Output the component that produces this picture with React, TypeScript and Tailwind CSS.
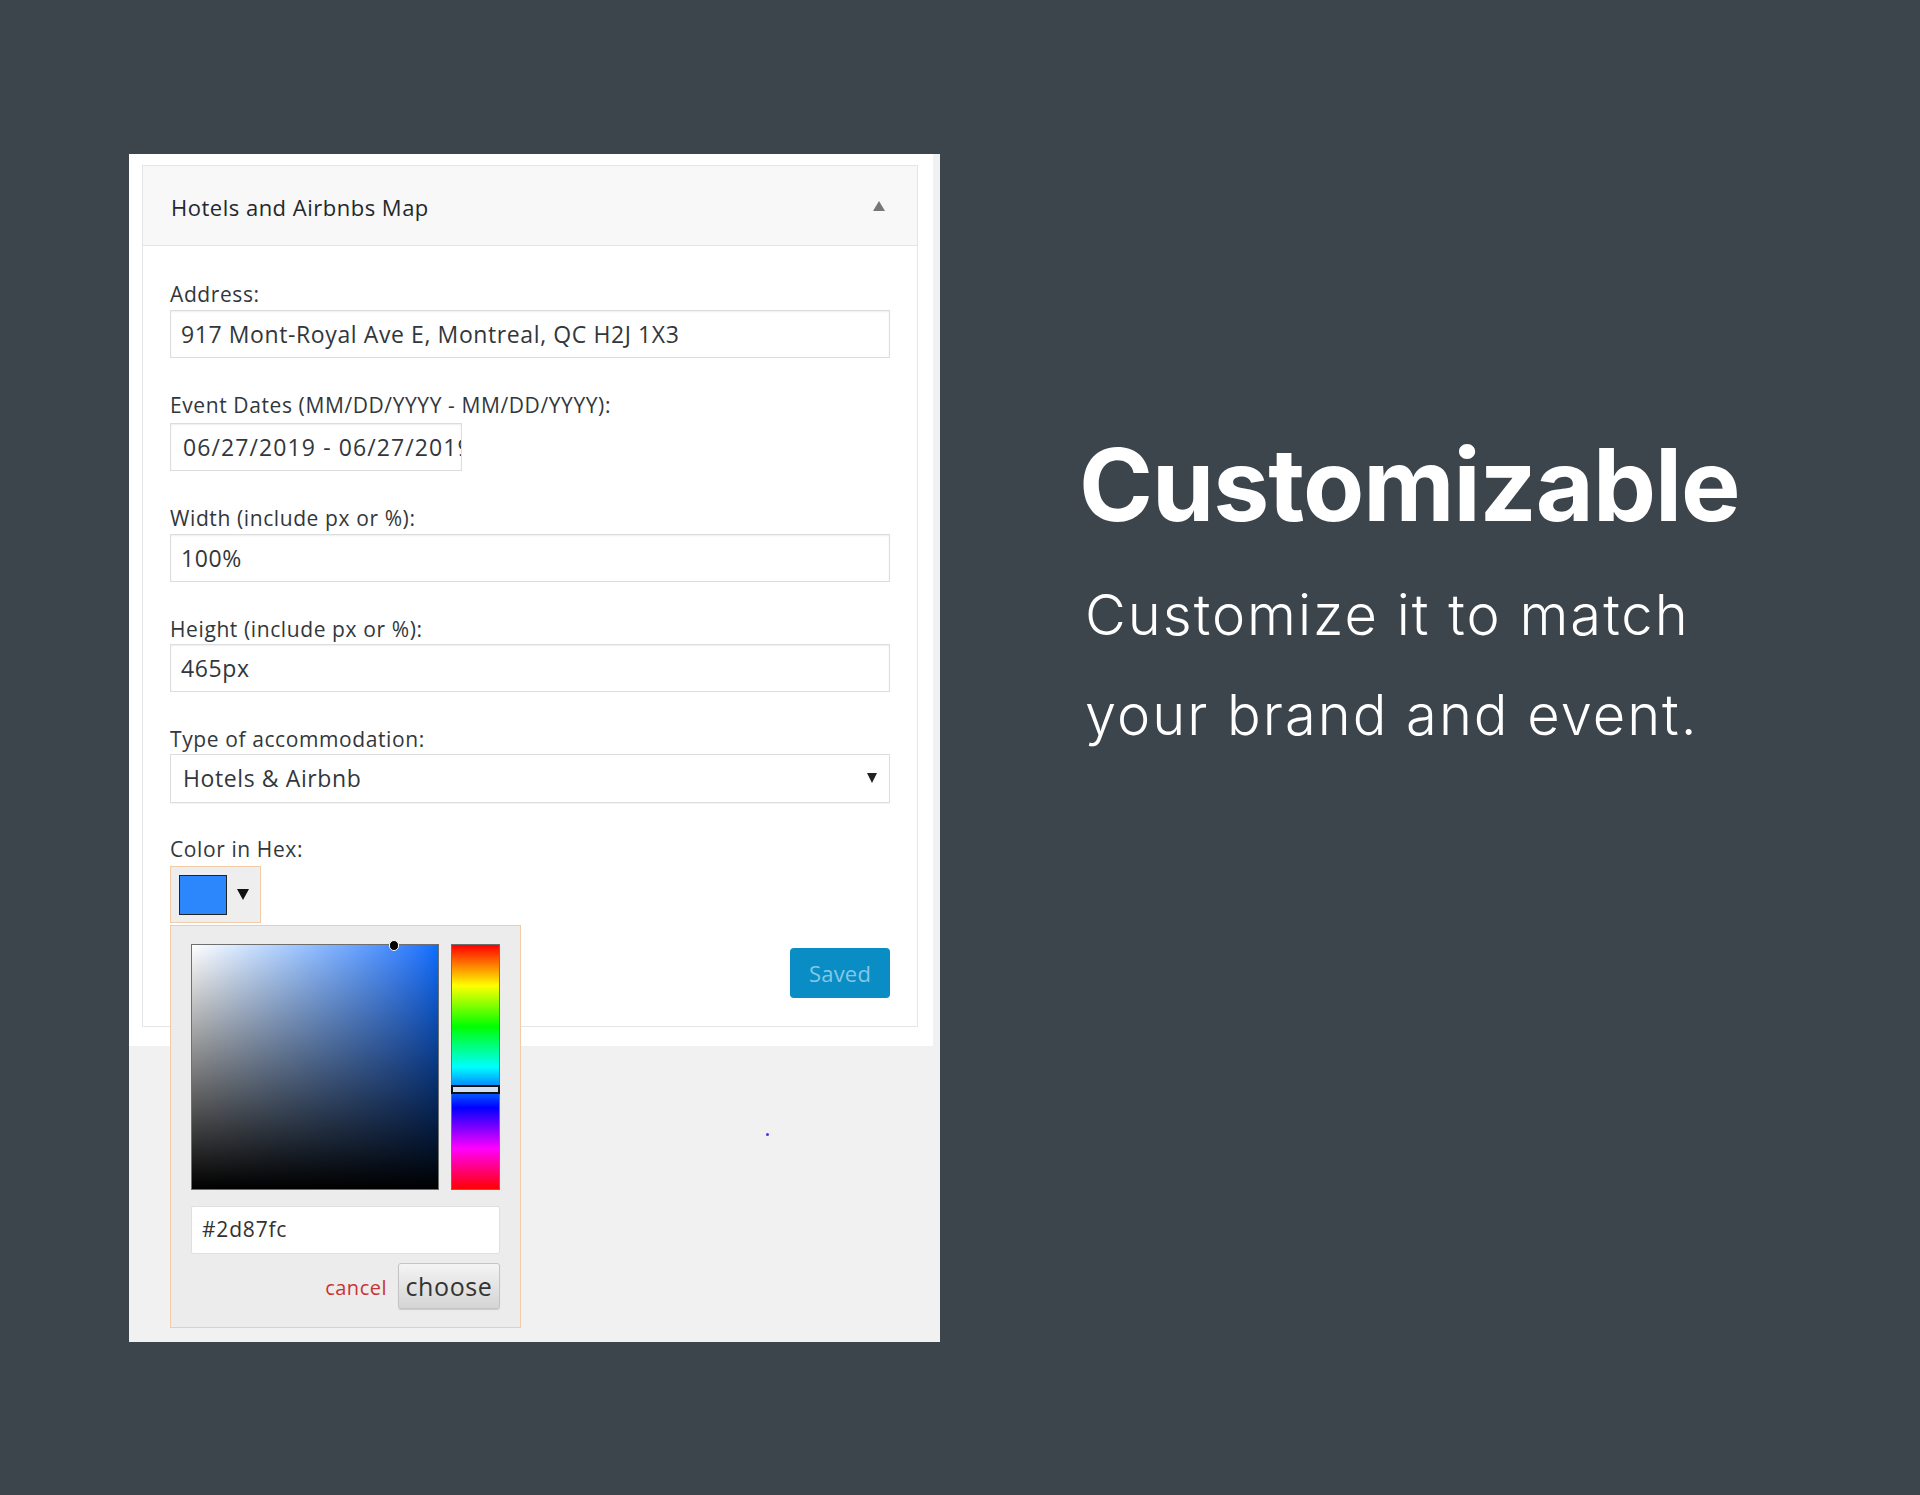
import React from 'react';

const FORM_FONT = "font-['Open_Sans',sans-serif]";

function Field({ label, children, gap = 'mt-[2px]' }: { label: string; children: React.ReactNode; gap?: string }) {
  return (
    <div>
      <div className="h-[28px] leading-[28px] text-[21px] text-[#32373c] tracking-[0.6px]">{label}</div>
      <div className={gap}>{children}</div>
    </div>
  );
}

function TextBox({ value, width = 'w-[720px]', inner = 'pl-[10px] tracking-[0.6px]' }: { value: string; width?: string; inner?: string }) {
  return (
    <div
      className={`${width} ${inner} h-[48px] border border-[#dddddd] bg-white shadow-[inset_0_1px_2px_rgba(0,0,0,0.07)] flex items-center overflow-hidden whitespace-nowrap text-[23px] text-[#32373c]`}
    >
      {value}
    </div>
  );
}

function ColorPicker() {
  return (
    <div className="absolute left-0 top-[59px] w-[351px] h-[403px] bg-[#ececec] border border-[#f3cba6] pt-[18px] px-[20px] z-10">
      <div className="flex gap-[12px]">
        {/* saturation / value square */}
        <div className="relative w-[249px] h-[246px] border border-[#6f6f6f] bg-linear-to-r from-white to-[#0a6dff]">
          <div className="absolute inset-0 bg-linear-to-t from-black to-transparent" />
          <div className="absolute left-[197px] -top-[5px] w-[10px] h-[11px] rounded-full bg-black border border-white" />
        </div>
        {/* hue strip */}
        <div className="relative w-[49px] h-[246px] border border-[#6f6f6f] bg-[linear-gradient(to_bottom,#ff0000,#ffff00,#00ff00,#00ffff,#0000ff,#ff00ff,#ff0000)]">
          <div className="absolute -left-[1px] -right-[1px] top-[140px] h-[9px] bg-[#cfe0f7] border-2 border-[#111]" />
        </div>
      </div>
      <div className="mt-[16px] w-[309px] h-[48px] bg-white border border-[#e0e0e0] rounded-[2px] flex items-center pl-[10px] text-[21px] text-[#333] tracking-[0.8px]">
        #2d87fc
      </div>
      <div className="mt-[9px] flex justify-end items-center gap-[11px]">
        <span className="text-[20px] text-[#cc3333] tracking-[0.5px] mt-[3px]">cancel</span>
        <button className="w-[102px] h-[46px] rounded-[3px] border border-[#c4c4c4] bg-linear-to-b from-[#f4f4f4] to-[#d4d4d4] text-[25px] text-[#333] leading-none tracking-[0.6px] shadow-[0_1px_1px_rgba(0,0,0,0.15)]">
          choose
        </button>
      </div>
    </div>
  );
}

export default function App() {
  return (
    <div className="w-[1920px] h-[1495px] bg-[#3c444c] flex items-start overflow-hidden">
      {/* Screenshot panel */}
      <div className={`ml-[129px] mt-[154px] w-[811px] h-[1188px] bg-[#f1f1f1] relative ${FORM_FONT}`}>
        <div className="w-[804px] bg-white pt-[11px] pl-[13px] pr-[15px] pb-[19px]">
          <div className="border border-[#e5e5e5] bg-white">
            <div className="h-[80px] bg-[#f8f8f8] border-b border-[#e5e5e5] flex items-center justify-between pl-[28px] pr-[32px]">
              <span className="text-[22px] text-[#23282d] tracking-[0.5px] font-medium mt-[3px]">Hotels and Airbnbs Map</span>
              <span className="w-0 h-0 border-l-[6px] border-r-[6px] border-b-[10px] border-l-transparent border-r-transparent border-b-[#777]" />
            </div>
            <div className="pt-[34px] pl-[27px] pr-[27px] pb-[28px] flex flex-col gap-[33px]">
              <Field label="Address:">
                <TextBox value="917 Mont-Royal Ave E, Montreal, QC H2J 1X3" />
              </Field>
              <Field label="Event Dates (MM/DD/YYYY - MM/DD/YYYY):" gap="mt-[4px]">
                <TextBox value="06/27/2019 - 06/27/2019" width="w-[292px]" inner="pl-[12px] tracking-[1.1px]" />
              </Field>
              <Field label="Width (include px or %):">
                <TextBox value="100%" />
              </Field>
              <Field label="Height (include px or %):" gap="mt-[1px]">
                <TextBox value="465px" />
              </Field>
              <Field label="Type of accommodation:" gap="mt-[1px]">
                <div className="w-[720px] h-[49px] border border-[#dddddd] bg-white shadow-[0_1px_1px_rgba(0,0,0,0.04)] flex items-center justify-between pl-[12px] pr-[12px] text-[23px] text-[#32373c] tracking-[0.6px]">
                  <span>Hotels &amp; Airbnb</span>
                  <span className="w-0 h-0 border-l-[5px] border-r-[5px] border-t-[10px] border-l-transparent border-r-transparent border-t-[#222] mb-[2px]" />
                </div>
              </Field>
              <div className="-mt-[1px]">
                <Field label="Color in Hex:" gap="mt-[3px]">
                  <div className="relative">
                    <div className="w-[91px] h-[57px] bg-[#eeeeee] border border-[#f3cba6] flex items-center pl-[8px] gap-[10px]">
                      <div className="w-[48px] h-[40px] bg-[#2d87fc] border border-[#222]" />
                      <span className="w-0 h-0 border-l-[6px] border-r-[6px] border-t-[11px] border-l-transparent border-r-transparent border-t-[#111]" />
                    </div>
                    <ColorPicker />
                  </div>
                </Field>
                <div className="flex justify-end mt-[25px]">
                  <button className="w-[100px] h-[50px] rounded-[4px] bg-[#0a8dc4] text-[#84c8e6] text-[22px] tracking-[0.2px]">
                    Saved
                  </button>
                </div>
              </div>
            </div>
          </div>
        </div>
        <div className="absolute left-[637px] top-[979px] w-[3px] h-[3px] rounded-full bg-[#3a3ae6]" />
      </div>

      {/* Copy */}
      <div className="ml-[139px] mt-[435px] text-white font-['Inter',sans-serif]">
        <h1 className="text-[100px] leading-[100px] font-bold tracking-[-1px]">Customizable</h1>
        <p className="mt-[30px] pl-[6px] text-[56px] leading-[100px] font-light tracking-[2px]">
          Customize it to match
          <br />
          your brand and event.
        </p>
      </div>
    </div>
  );
}
